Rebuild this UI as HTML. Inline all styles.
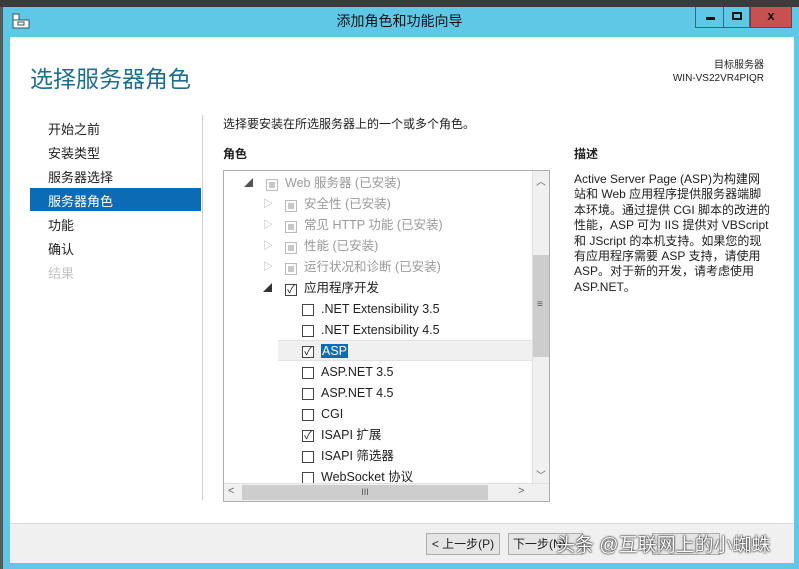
<!DOCTYPE html>
<html><head><meta charset="utf-8"><style>
*{margin:0;padding:0;box-sizing:border-box}
body{width:799px;height:569px;overflow:hidden;background:#5fc8e6;font-family:"Liberation Sans","Noto Sans CJK SC",sans-serif;font-size:12px;color:#1e1e1e;position:relative}
.abs{position:absolute}
.top{left:0;top:0;width:799px;height:7px;background:#3b3b3b}
.leftdark{left:0;top:7px;width:3px;height:562px;background:#5a5a5a}
.title{left:0;top:7px;width:799px;height:30px;text-align:center;line-height:29px;font-size:14px;color:#111}
.btn{top:7px;height:21px;border:1px solid #2a6d88;border-top:none}
.win{left:10px;top:37px;width:784px;height:526px;background:#fff}
.foot{left:10px;top:523px;width:784px;height:40px;background:#f0f0f0;border-top:1px solid #dcdcdc}
.nav{left:48px;font-size:13px}
.cb{width:12px;height:12px;border:1px solid #444;background:#fff}
.cbg{width:12px;height:12px;border:1px solid #bbb;background:#fff}
.cbg::after{content:"";position:absolute;left:2px;top:2px;width:6px;height:6px;background:#c8c8c8}
.row{position:absolute;height:21px;line-height:21px;font-size:12.5px;white-space:nowrap}
.gray{color:#9a9a9a}
.tri{color:#aaa}
.fbtn{top:533px;height:22px;border:1px solid #adadad;background:#e5e5e5;font-size:12px;line-height:20px;text-align:center}
</style></head><body>
<div class="abs top"></div>
<div class="abs leftdark"></div>
<div class="abs title">添加角色和功能向导</div>
<svg class="abs" style="left:12px;top:13px" width="18" height="16"><rect x="1" y="1" width="6" height="6" fill="#fff" stroke="#355"/><rect x="1" y="7" width="16" height="8" fill="#fff" stroke="#355"/><rect x="6" y="9" width="6" height="3" fill="none" stroke="#355"/></svg>
<div class="abs btn" style="left:695px;width:29px"><div class="abs" style="left:10px;top:10px;width:9px;height:3px;background:#111"></div></div>
<div class="abs btn" style="left:724px;width:26px;border-left:none"><div class="abs" style="left:8px;top:5px;width:10px;height:8px;border:2px solid #111"></div></div>
<div class="abs btn" style="left:750px;width:42px;background:#c75050;border-color:#8b3636;text-align:center;line-height:18px;font-weight:bold;font-size:13px;color:#111">x</div>
<div class="abs win"></div>
<div class="abs" style="left:30px;top:60px;font-size:23px;color:#1b6e8e">选择服务器角色</div>
<div class="abs" style="right:35px;top:59px;font-size:10px;text-align:right;line-height:13px">目标服务器<br>WIN-VS22VR4PIQR</div>
<div class="abs nav" style="top:119px">开始之前</div>
<div class="abs nav" style="top:143px">安装类型</div>
<div class="abs nav" style="top:167px">服务器选择</div>
<div class="abs" style="left:30px;top:188px;width:171px;height:23px;background:#0b6bb5"></div>
<div class="abs nav" style="top:191px;color:#fff">服务器角色</div>
<div class="abs nav" style="top:215px">功能</div>
<div class="abs nav" style="top:239px">确认</div>
<div class="abs nav" style="top:263px;color:#c3c3c3">结果</div>
<div class="abs" style="left:202px;top:115px;width:1px;height:385px;background:#d0d0d0"></div>
<div class="abs" style="left:223px;top:115px;font-size:12px">选择要安装在所选服务器上的一个或多个角色。</div>
<div class="abs" style="left:223px;top:145px;font-size:12px;font-weight:bold">角色</div>
<div class="abs" style="left:574px;top:145px;font-size:12px;font-weight:bold">描述</div>
<div class="abs" style="left:574px;top:172px;width:198px;font-size:12px;line-height:15.4px">Active Server Page (ASP)为构建网站和 Web 应用程序提供服务器端脚本环境。通过提供 CGI 脚本的改进的性能，ASP 可为 IIS 提供对 VBScript 和 JScript 的本机支持。如果您的现有应用程序需要 ASP 支持，请使用 ASP。对于新的开发，请考虑使用 ASP.NET。</div>
<div class="abs" style="left:223px;top:170px;width:327px;height:332px;border:1px solid #adadad;overflow:hidden">
 <div class="abs" style="left:54px;top:169px;width:254px;height:21px;background:#f0f0f0;border-top:1px solid #e2e2e2;border-bottom:1px solid #e2e2e2"></div>
 <div class="row tri" style="left:20px;top:2px;font-size:9px;color:#555">◢</div><div class="abs cbg" style="left:42px;top:8px"></div><div class="row gray" style="left:61px;top:2px">Web 服务器 (已安装)</div>
 <div class="row tri" style="left:39px;top:23px;font-size:10px">▷</div><div class="abs cbg" style="left:61px;top:29px"></div><div class="row gray" style="left:80px;top:23px">安全性 (已安装)</div>
 <div class="row tri" style="left:39px;top:44px;font-size:10px">▷</div><div class="abs cbg" style="left:61px;top:50px"></div><div class="row gray" style="left:80px;top:44px">常见 HTTP 功能 (已安装)</div>
 <div class="row tri" style="left:39px;top:65px;font-size:10px">▷</div><div class="abs cbg" style="left:61px;top:71px"></div><div class="row gray" style="left:80px;top:65px">性能 (已安装)</div>
 <div class="row tri" style="left:39px;top:86px;font-size:10px">▷</div><div class="abs cbg" style="left:61px;top:92px"></div><div class="row gray" style="left:80px;top:86px">运行状况和诊断 (已安装)</div>
 <div class="row" style="left:39px;top:107px;font-size:9px;color:#333">◢</div><div class="abs cb" style="left:61px;top:113px;font-size:11px;line-height:10px;text-align:center">✓</div><div class="row" style="left:80px;top:107px">应用程序开发</div>
 <div class="abs cb" style="left:78px;top:133px"></div><div class="row" style="left:97px;top:128px">.NET Extensibility 3.5</div>
 <div class="abs cb" style="left:78px;top:154px"></div><div class="row" style="left:97px;top:149px">.NET Extensibility 4.5</div>
 <div class="abs cb" style="left:78px;top:175px;font-size:11px;line-height:10px;text-align:center">✓</div><div class="row" style="left:97px;top:170px"><span style="background:#0b6bb5;color:#fff;padding:0 1px">ASP</span></div>
 <div class="abs cb" style="left:78px;top:196px"></div><div class="row" style="left:97px;top:191px">ASP.NET 3.5</div>
 <div class="abs cb" style="left:78px;top:217px"></div><div class="row" style="left:97px;top:212px">ASP.NET 4.5</div>
 <div class="abs cb" style="left:78px;top:238px"></div><div class="row" style="left:97px;top:233px">CGI</div>
 <div class="abs cb" style="left:78px;top:259px;font-size:11px;line-height:10px;text-align:center">✓</div><div class="row" style="left:97px;top:254px">ISAPI 扩展</div>
 <div class="abs cb" style="left:78px;top:280px"></div><div class="row" style="left:97px;top:275px">ISAPI 筛选器</div>
 <div class="abs cb" style="left:78px;top:301px"></div><div class="row" style="left:97px;top:296px">WebSocket 协议</div>
 <div class="abs" style="left:308px;top:0;width:18px;height:312px;background:#f0f0f0;border-left:1px solid #e0e0e0"></div>
 <div class="abs" style="left:312px;top:2px;font-size:10px;color:#666">︿</div>
 <div class="abs" style="left:309px;top:84px;width:16px;height:102px;background:#cdcdcd"></div>
 <div class="abs" style="left:313px;top:128px;font-size:10px;color:#555">≡</div>
 <div class="abs" style="left:312px;top:296px;font-size:10px;color:#666">﹀</div>
 <div class="abs" style="left:0;top:312px;width:326px;height:19px;background:#f0f0f0;border-top:1px solid #e0e0e0"></div>
 <div class="abs" style="left:4px;top:314px;font-size:11px;color:#666">&lt;</div>
 <div class="abs" style="left:18px;top:314px;width:246px;height:15px;background:#cdcdcd;text-align:center;font-size:9px;line-height:15px;color:#555">III</div>
 <div class="abs" style="left:294px;top:314px;font-size:11px;color:#666">&gt;</div>
</div>
<div class="abs foot"></div>
<div class="abs fbtn" style="left:426px;width:74px">&lt; 上一步(P)</div>
<div class="abs fbtn" style="left:508px;width:75px;text-align:left;padding-left:4px">下一步(N)</div>
<div class="abs fbtn" style="left:652px;width:68px"></div>
<div class="abs" style="left:556px;top:530px;font-size:19px;color:#fff;text-shadow:0 0 2px #000,0 0 1px #000;white-space:nowrap">头条 @互联网上的小蜘蛛</div>
</body></html>
